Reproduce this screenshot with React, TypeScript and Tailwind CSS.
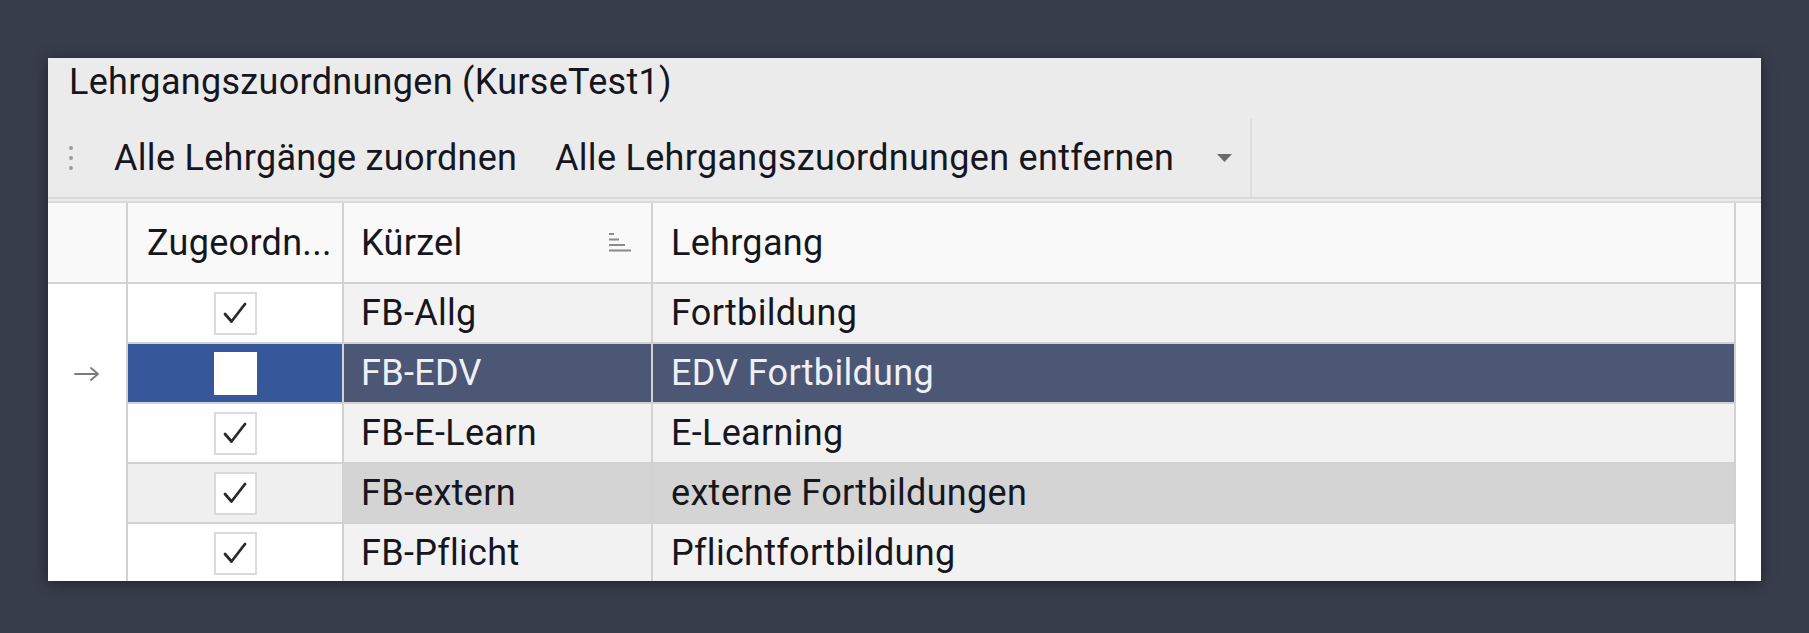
import React from 'react'

type Row = { code: string; name: string; checked: boolean; state?: 'selected' | 'hover' }

const rows: Row[] = [
  { code: 'FB-Allg', name: 'Fortbildung', checked: true },
  { code: 'FB-EDV', name: 'EDV Fortbildung', checked: false, state: 'selected' },
  { code: 'FB-E-Learn', name: 'E-Learning', checked: true },
  { code: 'FB-extern', name: 'externe Fortbildungen', checked: true, state: 'hover' },
  { code: 'FB-Pflicht', name: 'Pflichtfortbildung', checked: true },
]

function Check() {
  return (
    <svg width="24" height="22" viewBox="0 0 24 22" fill="none">
      <path d="M2 12 L8.5 19.5 L22 2" stroke="#2a2a2a" strokeWidth="2.8" strokeLinecap="round" strokeLinejoin="round" />
    </svg>
  )
}

function SortIcon() {
  return (
    <svg width="22" height="19" viewBox="0 0 22 19">
      <rect x="0" y="0" width="5" height="2" fill="#8a8a8a" />
      <rect x="0" y="5.5" width="10" height="2" fill="#8a8a8a" />
      <rect x="0" y="11" width="16" height="2" fill="#8a8a8a" />
      <rect x="0" y="16.5" width="22" height="2" fill="#8a8a8a" />
    </svg>
  )
}

function App() {
  return (
    <div className="min-h-screen bg-[#383d4c] pt-[58px] pl-[48px] font-['Roboto',sans-serif] text-[36px] tracking-[0.3px] text-[#16161f]">
      <div className="w-[1713px] h-[523px] bg-[#ebebeb] overflow-hidden shadow-[0_2px_14px_rgba(0,0,0,0.45)]">
        {/* Title */}
        <div className="h-[61px] pt-[4px] pl-[21px] leading-[40px]">Lehrgangszuordnungen (KurseTest1)</div>

        {/* Toolbar */}
        <div className="h-[80px] flex border-b-2 border-[#d8d8d8]">
          <div className="flex items-center w-[1204px] border-r-2 border-[#dedede]">
            <div className="w-[66px] pl-[21px] flex flex-col gap-[6px]">
              <span className="w-[4px] h-[4px] rounded-full bg-[#9c9c9c]" />
              <span className="w-[4px] h-[4px] rounded-full bg-[#9c9c9c]" />
              <span className="w-[4px] h-[4px] rounded-full bg-[#9c9c9c]" />
            </div>
            <div className="w-[441px]">Alle Lehrgänge zuordnen</div>
            <div className="flex-1 flex items-center pr-[18px]">
              <span>Alle Lehrgangszuordnungen entfernen</span>
              <svg className="ml-auto" width="15" height="8" viewBox="0 0 15 8">
                <path d="M0 0 L15 0 L7.5 8 Z" fill="#6b6b6b" />
              </svg>
            </div>
          </div>
        </div>

        {/* Grid */}
        <div className="mt-[2px] bg-white border-t-2 border-[#d9d9d9]">
          <div className="flex h-[81px] bg-[#f9f9f9] border-b-2 border-[#d2d2d2]">
            <div className="w-[80px] border-r-2 border-[#d2d2d2]" />
            <div className="w-[216px] flex items-center pl-[19px] border-r-2 border-[#d2d2d2]">Zugeordn...</div>
            <div className="w-[309px] flex items-center pl-[17px] pr-[20px] border-r-2 border-[#d2d2d2]">
              <span>Kürzel</span>
              <span className="ml-auto">
                <SortIcon />
              </span>
            </div>
            <div className="w-[1083px] flex items-center pl-[18px] border-r-2 border-[#d2d2d2]">Lehrgang</div>
            <div className="flex-1" />
          </div>

          {rows.map((r) => {
            const sel = r.state === 'selected'
            const hov = r.state === 'hover'
            const cellBg = sel ? 'bg-[#4b5775] text-[#eef0f5]' : hov ? 'bg-[#d4d4d4]' : 'bg-[#f2f2f2]'
            const chkBg = sel ? 'bg-[#36589b]' : hov ? 'bg-[#efefef]' : 'bg-white'
            return (
              <div key={r.code} className="flex h-[60px] bg-white">
                <div className="w-[80px] border-r-2 border-[#d2d2d2] flex items-center justify-center">
                  {sel && (
                    <svg width="26" height="14" viewBox="0 0 26 14" fill="none">
                      <path d="M1 7 H24 M17 1 L24 7 L17 13" stroke="#7a7a7a" strokeWidth="1.8" strokeLinecap="round" strokeLinejoin="round" />
                    </svg>
                  )}
                </div>
                <div className={`w-[216px] flex items-center justify-center border-r-2 border-b-2 border-[#d2d2d2] ${chkBg}`}>
                  {sel ? (
                    <div className="w-[43px] h-[43px] bg-white" />
                  ) : (
                    <div className="w-[43px] h-[43px] bg-white border-2 border-[#dadada] flex items-center justify-center">
                      {r.checked && <Check />}
                    </div>
                  )}
                </div>
                <div className={`w-[309px] flex items-center pl-[17px] border-r-2 border-b-2 border-[#d2d2d2] ${cellBg}`}>{r.code}</div>
                <div className={`w-[1083px] flex items-center pl-[18px] border-r-2 border-b-2 border-[#d2d2d2] ${cellBg}`}>{r.name}</div>
                <div className="flex-1 bg-white" />
              </div>
            )
          })}
        </div>
      </div>
    </div>
  )
}

export default App
